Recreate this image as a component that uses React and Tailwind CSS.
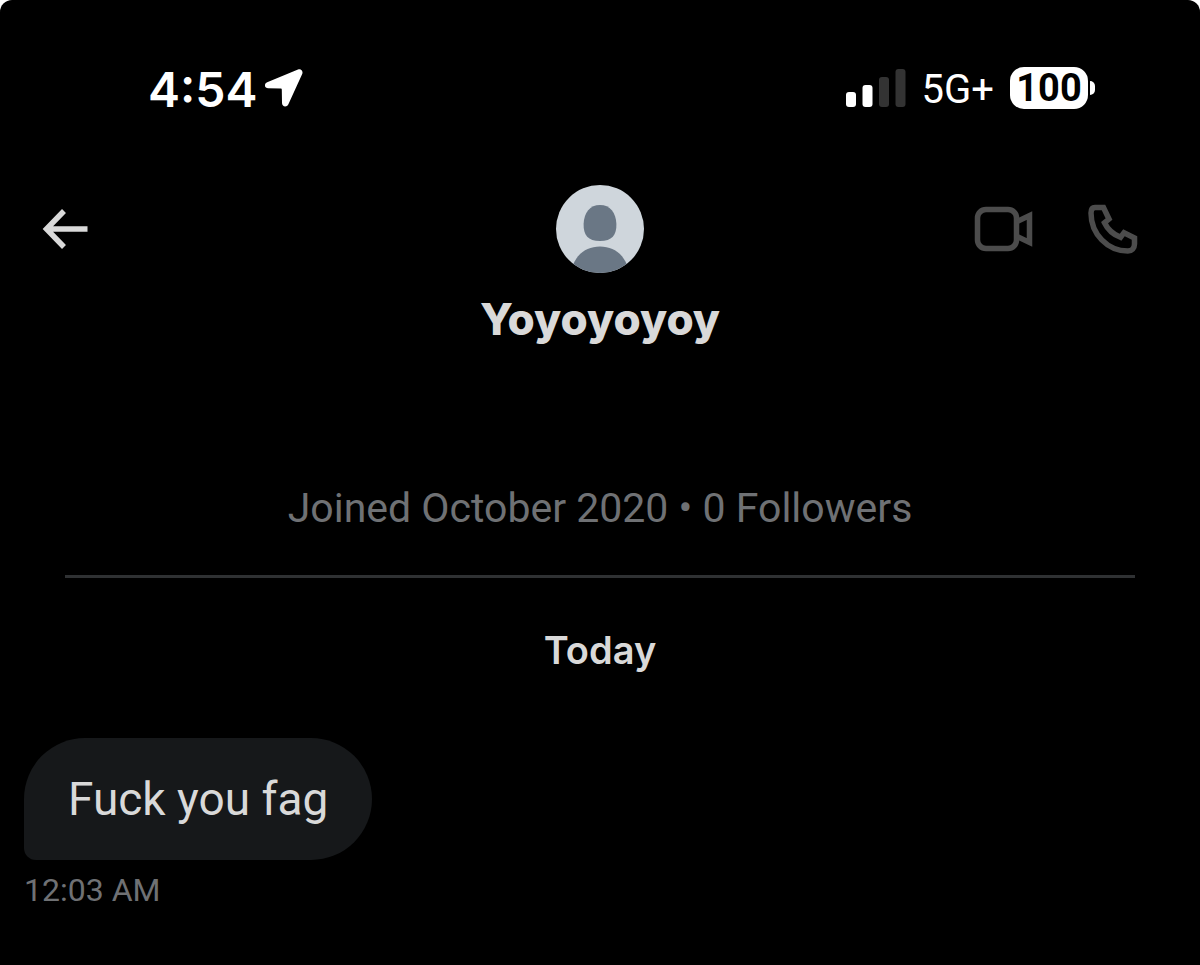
import { useState } from "react";

// iOS style location arrow
const LocationArrow = () => (
  <svg viewBox="0 0 40 40" className="w-10 h-10" fill="currentColor" aria-hidden="true">
    <path d="M33 1.6 2.2 14.2c-3.4 1.5-2.9 6 1 6.1l12.4.3c.8 0 1.2.4 1.2 1.2l.2 13.2c.1 4 4.8 4.7 6.4 1.2L37.2 6c1.2-3-1.2-5.6-4.2-4.4z" />
  </svg>
);

const SignalBars = () => (
  <svg viewBox="0 0 60 38" className="w-[60px] h-[38px]" aria-hidden="true">
    <rect x="0" y="23" width="10" height="15" rx="3" fill="#fff" />
    <rect x="16.5" y="16" width="10" height="22" rx="3" fill="#fff" />
    <rect x="33" y="8" width="10" height="30" rx="3" fill="#333" />
    <rect x="49.5" y="0" width="10" height="38" rx="3" fill="#333" />
  </svg>
);

const BackIcon = () => (
  <svg viewBox="0 0 48 44" className="w-12 h-11" fill="none" stroke="currentColor" strokeWidth="5.5" aria-hidden="true">
    <path d="M24 4 6.5 22 24 40M6.5 22h41" />
  </svg>
);

const VideoIcon = () => (
  <svg viewBox="0 0 60 52" className="w-[60px] h-[52px]" fill="none" stroke="currentColor" strokeWidth="5.5" aria-hidden="true">
    <rect x="3.5" y="6.5" width="39" height="39" rx="8.5" />
    <path d="M43 18.5 55.5 12.500v27L43 33.500" />
  </svg>
);

const PhoneIcon = () => (
  <svg viewBox="0 0 52 52" className="w-[52px] h-[52px]" fill="none" stroke="currentColor" strokeWidth="5.5" aria-hidden="true">
    <path d="M9 4.500h8.500l5.500 11.500-4.500 3.700c3 6.300 9 11.800 16 14.600l3.500-4.600L48.500 35v6c0 4-2.700 7-6.700 7C21.500 48 5 31 5 10c0-3.500 1.500-5.500 4-5.500z" />
  </svg>
);

const Avatar = () => (
  <svg viewBox="0 0 88 88" className="w-[88px] h-[88px] rounded-full" role="img" aria-label="Profile picture">
    <rect width="88" height="88" fill="#cfd6dc" />
    <path d="M44 20c10 0 16 7.5 16.4 19C60.7 50 56 56 44 56s-16.7-6-16.4-17C28 27.500 34 20 44 20z" fill="#6a7785" />
    <path d="M44 61.500c13 0 22.500 7 27 18.500v8H17v-8c4.500-11.500 14-18.500 27-18.500z" fill="#6a7785" />
  </svg>
);

const initialMessages = [{ id: 1, text: "Fuck you fag", time: "12:03 AM" }];

export default function App() {
  const [messages] = useState(initialMessages);

  return (
    <div className="bg-white">
      <div className="min-h-screen bg-black rounded-t-xl font-['Roboto',sans-serif] text-[#d9d9d9]">
        {/* Status Bar */}
        <div className="flex items-center justify-between pl-[148px] pr-[105px] pt-[62px] text-white">
          <div className="flex items-center gap-2">
            <span className="pt-1 font-['Inter',sans-serif] text-5xl leading-[48px] font-semibold">4:54</span>
            <LocationArrow />
          </div>
          <div className="flex items-center gap-4">
            <SignalBars />
            <span className="pt-1 text-[40px] leading-[48px]">5G+</span>
            <div className="flex items-center gap-[2px]">
              <span className="w-[78px] h-[42px] rounded-[14px] bg-white text-black text-center text-[38px] leading-[42px] font-bold">
                100
              </span>
              <span className="w-[5px] h-[14px] rounded-r-full bg-white"></span>
            </div>
          </div>
        </div>

        {/* Conversation Header */}
        <header className="grid grid-cols-3 items-start px-10 pt-[71px]">
          <button type="button" aria-label="Back" className="flex items-center h-[88px]">
            <BackIcon />
          </button>
          <div className="flex flex-col items-center">
            <Avatar />
            <h1 className="mt-4 font-['Inter',sans-serif] text-[44px] leading-[60px] font-extrabold">
              Yoyoyoyoy
            </h1>
          </div>
          <div className="flex items-center justify-end gap-[52px] h-[88px] pr-[22px] text-[#4c4c4c]">
            <button type="button" aria-label="Video call">
              <VideoIcon />
            </button>
            <button type="button" aria-label="Audio call">
              <PhoneIcon />
            </button>
          </div>
        </header>

        {/* Profile Info */}
        <div className="mx-[65px] mt-[135px] pb-[43px] border-b-3 border-[#2f3133] text-center text-[#6f7174] text-[41px] leading-[48px]">
          Joined October 2020 • 0 Followers
        </div>

        {/* Messages */}
        <main className="px-6 pb-12">
          <h2 className="mt-12 text-center font-['Inter',sans-serif] text-[38px] leading-[48px] font-semibold">
            Today
          </h2>
          {messages.map((message) => (
            <div key={message.id} className="flex flex-col items-start mt-16">
              <p className="px-11 py-8 bg-[#16181a] rounded-[61px] rounded-bl-xl text-[46px] leading-[58px]">
                {message.text}
              </p>
              <time className="mt-2 text-[32px] leading-[44px] text-[#6f7174]">{message.time}</time>
            </div>
          ))}
        </main>
      </div>
    </div>
  );
}
